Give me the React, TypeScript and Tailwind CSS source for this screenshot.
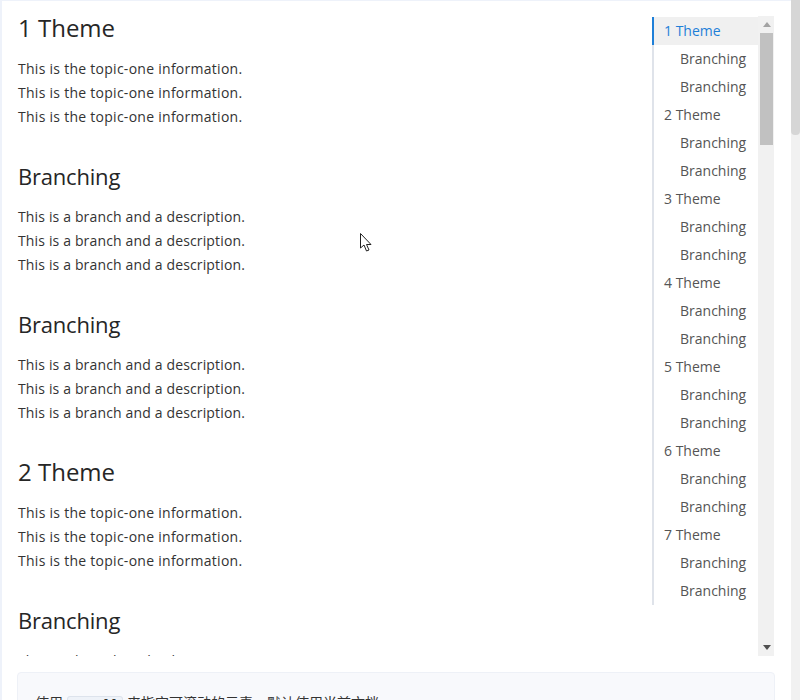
import React from "react";

const sections = [
  { title: "1 Theme", theme: true },
  { title: "Branching", theme: false },
  { title: "Branching", theme: false },
  { title: "2 Theme", theme: true },
  { title: "Branching", theme: false },
];

const anchorItems: { label: string; sub: boolean }[] = [];
for (let i = 1; i <= 7; i++) {
  anchorItems.push({ label: `${i} Theme`, sub: false });
  anchorItems.push({ label: "Branching", sub: true });
  anchorItems.push({ label: "Branching", sub: true });
}

export default function App() {
  return (
    <div
      className="relative flex h-[700px] w-[800px] overflow-hidden bg-white"
      style={{ fontFamily: '"Open Sans", "Noto Sans CJK SC", sans-serif' }}
    >
      <div className="flex w-[791px] shrink-0 flex-col border-l-2 border-t border-[#eef2fa]">
        <div className="flex h-[655px] shrink-0">
          <div className="h-[655px] w-[650px] shrink-0 overflow-hidden pl-4 pt-[10px]">
            {sections.map((s, i) => (
              <div key={i} className="pb-[30px]">
                <div
                  className={
                    s.theme
                      ? "mb-[10px] h-[36px] text-[24px] leading-[34px] text-[#262626]"
                      : "mb-[10px] h-[36px] text-[22px] leading-[35px] tracking-[-0.2px] text-[#262626]"
                  }
                >
                  {s.title}
                </div>
                {[0, 1, 2].map((k) => (
                  <p
                    key={k}
                    className={
                      s.theme
                        ? "text-[14px] leading-[24px] tracking-[0.27px] text-[#333]"
                        : "text-[14px] leading-[24px] tracking-[0.15px] text-[#333]"
                    }
                  >
                    {s.theme
                      ? "This is the topic-one information."
                      : "This is a branch and a description."}
                  </p>
                ))}
              </div>
            ))}
          </div>
          <div className="mt-[15px] flex h-[640px] shrink-0">
            <div className="w-[106px] bg-white pt-px">
              {anchorItems.map((it, i) => (
                <div
                  key={i}
                  className={
                    i === 0
                      ? "h-[28px] border-l-2 border-[#1e7fd8] bg-[#f0f0f0] pl-[10px] text-[14px] leading-[28px] text-[#1e7fd8]"
                      : it.sub
                      ? "h-[28px] border-l-2 border-[#dfe3ea] pl-[26px] text-[14px] leading-[28px] text-[#555]"
                      : "h-[28px] border-l-2 border-[#dfe3ea] pl-[10px] text-[14px] leading-[28px] text-[#555]"
                  }
                >
                  {it.label}
                </div>
              ))}
            </div>
            <div className="flex w-[16px] flex-col bg-[#f1f1f1] pl-[2px] pr-[1px]">
              <div className="flex h-[17px] items-center justify-center">
                <svg width="8" height="5" viewBox="0 0 8 5">
                  <path d="M0 5 L4 0 L8 5 Z" fill="#a3a3a3" />
                </svg>
              </div>
              <div className="h-[112px] bg-[#c1c1c1]" />
              <div className="flex-1" />
              <div className="flex h-[17px] items-center justify-center">
                <svg width="8" height="5" viewBox="0 0 8 5">
                  <path d="M0 0 L8 0 L4 5 Z" fill="#505050" />
                </svg>
              </div>
            </div>
          </div>
        </div>
        <div className="ml-[15px] mt-4 w-[758px] rounded-t border border-[#eef1f7] bg-[#f8f9fc] px-[17px] pt-[18px] text-[14px] leading-[24px] text-[#333]">
          使用{" "}
          <code
            className="rounded-[3px] border border-[#dde3ec] bg-[#eef2f8] px-1 text-[13px]"
            style={{ fontFamily: '"Liberation Mono", monospace' }}
          >
            scroll
          </code>{" "}
          来指定可滚动的元素，默认使用当前文档
        </div>
      </div>
      <div className="w-[9px] shrink-0 bg-[#f1f1f1]">
        <div className="h-[135px] rounded-b bg-[#d6d6d6]" />
      </div>
      <svg
        className="absolute left-[360px] top-[233px]"
        width="14"
        height="20"
        viewBox="0 0 14 20"
      >
        <path
          d="M0.5 0.5 L0.5 15 L4 12 L6.5 18 L9 17 L6.5 11.5 L11 11.5 Z"
          fill="white"
          stroke="#222"
          strokeWidth="1"
          strokeLinejoin="round"
        />
      </svg>
    </div>
  );
}
